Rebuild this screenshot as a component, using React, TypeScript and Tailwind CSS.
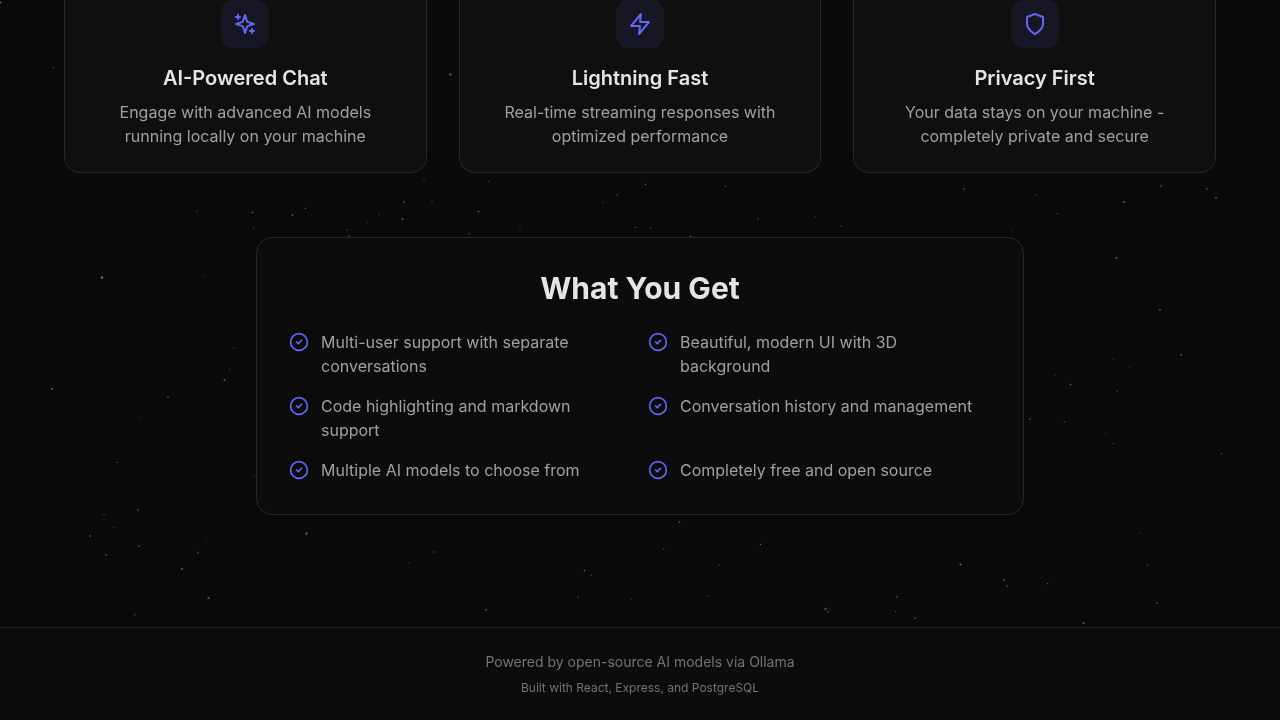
import type { ReactNode } from "react";

const INDIGO = "#6366f1";
const VIOLET = "#a855f7";
const TEAL = "#2bb3a0";
const CYAN = "#2aa5b8";

// Each star: x, y, colour, opacity, radius
type Star = [number, number, string, number, number];

const stars: Star[] = [
  [0.5, 2.5, INDIGO, 0.8, 1], [96.5, 6.5, INDIGO, 0.25, 1], [53.5, 67.5, TEAL, 0.45, 0.8], [450.5, 74.5, CYAN, 0.8, 1.1],
  [424, 180, INDIGO, 0.4, 0.8], [432, 201, TEAL, 0.4, 0.8], [404, 202, INDIGO, 0.6, 0.9], [197, 211, CYAN, 0.45, 0.8],
  [252.5, 212.5, INDIGO, 0.9, 0.8], [305.5, 208.5, TEAL, 0.6, 0.8], [292.5, 215, VIOLET, 0.65, 0.9], [379, 214.5, VIOLET, 0.4, 0.8],
  [402.5, 219, VIOLET, 0.7, 1], [367, 222.5, CYAN, 0.4, 0.8], [253.5, 228.5, INDIGO, 0.5, 0.7], [347, 230, VIOLET, 0.4, 0.8],
  [349, 236, CYAN, 0.5, 0.9], [489, 181.5, INDIGO, 0.5, 0.8], [645.5, 184.5, TEAL, 0.8, 0.7], [725.5, 186.5, INDIGO, 0.8, 0.7],
  [617, 195, VIOLET, 0.4, 0.9], [603, 202.5, INDIGO, 0.5, 0.7], [478.5, 211.5, TEAL, 0.8, 0.8], [758, 219, TEAL, 0.5, 0.8],
  [815, 217, TEAL, 0.45, 0.8], [841, 226, INDIGO, 0.3, 0.9], [635.5, 227.5, INDIGO, 0.7, 0.8], [650.5, 228, INDIGO, 0.6, 0.7],
  [520, 229, VIOLET, 0.4, 0.8], [469, 234, CYAN, 0.6, 0.8], [690.5, 236.5, VIOLET, 0.8, 0.8],
  [964, 189, INDIGO, 0.55, 1], [1036.5, 195, TEAL, 0.5, 0.8], [1057.5, 213.5, TEAL, 0.65, 0.7], [1124, 202, TEAL, 0.65, 1],
  [1161, 186, VIOLET, 0.55, 0.9], [1207, 189, VIOLET, 0.45, 1], [1216, 198, VIOLET, 0.6, 1], [1012, 232, INDIGO, 0.4, 0.8],
  [1116.5, 258, "#7c4df5", 0.8, 1.1], [1160, 310, CYAN, 0.65, 0.9], [1181, 355, CYAN, 0.65, 0.9], [1113.5, 359, INDIGO, 0.5, 0.8],
  [1129.5, 367, INDIGO, 0.35, 0.8], [1055, 375, INDIGO, 0.4, 0.8], [1070.5, 384.5, INDIGO, 0.9, 0.8], [1117, 391, INDIGO, 0.45, 0.9],
  [1030, 419, VIOLET, 0.5, 1], [1064.5, 422, CYAN, 0.45, 0.8], [1106, 433.5, TEAL, 0.4, 0.8], [1113.5, 443.5, INDIGO, 0.7, 0.7],
  [1221.5, 453.5, INDIGO, 0.7, 0.7], [1140, 533, INDIGO, 0.35, 0.8], [1147.5, 565, TEAL, 0.6, 0.8], [1004, 580, VIOLET, 0.6, 1],
  [1007, 586, INDIGO, 0.5, 1], [1047.5, 583.5, INDIGO, 0.7, 0.7], [1157, 603, INDIGO, 0.5, 1], [1083.5, 623, INDIGO, 0.8, 0.9],
  [102, 277.5, CYAN, 0.85, 1.2], [205, 276, INDIGO, 0.3, 0.8], [234, 348, TEAL, 0.4, 0.8], [230, 369.5, CYAN, 0.45, 0.8],
  [224.5, 380, CYAN, 0.7, 0.9], [52, 389, CYAN, 0.75, 1], [168, 397, VIOLET, 0.6, 0.9], [141, 418, INDIGO, 0.35, 0.8],
  [117, 462.5, INDIGO, 0.6, 0.8], [254.5, 476, INDIGO, 0.4, 0.8], [138, 510, INDIGO, 0.5, 1], [104, 514.5, CYAN, 0.5, 0.8],
  [114, 527.5, INDIGO, 0.5, 0.7], [90, 536, TEAL, 0.55, 0.9], [139, 546, VIOLET, 0.55, 1], [206, 539, INDIGO, 0.3, 0.8],
  [198, 552.5, INDIGO, 0.6, 0.9], [106, 555, INDIGO, 0.6, 1], [182, 569, CYAN, 0.7, 1], [208.5, 598, VIOLET, 0.75, 1.1],
  [134.5, 615, VIOLET, 0.4, 0.9], [306.5, 533.5, CYAN, 0.9, 1.1], [434, 552, TEAL, 0.55, 0.8], [409, 563, INDIGO, 0.35, 0.8],
  [584.5, 570.5, CYAN, 0.9, 0.7], [591, 575, INDIGO, 0.3, 1], [578, 597, TEAL, 0.5, 0.8], [631, 599, INDIGO, 0.45, 0.8],
  [486, 610, TEAL, 0.6, 1], [679.5, 522, TEAL, 0.6, 0.9], [663.5, 549, INDIGO, 0.6, 0.8], [760.5, 544.5, VIOLET, 0.75, 0.7],
  [719, 565, TEAL, 0.3, 1], [708, 596, TEAL, 0.25, 1], [960.5, 564.5, CYAN, 0.85, 1], [897, 597, CYAN, 0.5, 0.9],
  [825.5, 609, TEAL, 0.7, 1], [828, 612, INDIGO, 0.5, 0.9], [830, 608.5, INDIGO, 0.25, 0.9], [895.5, 611.5, INDIGO, 0.65, 0.7],
  [915, 618, CYAN, 0.5, 1], [267, 507, TEAL, 0.5, 0.9], [646, 510, INDIGO, 0.5, 0.8], [781, 511, INDIGO, 0.25, 0.8],
  [369, 239, INDIGO, 0.45, 0.8], [889, 254, TEAL, 0.3, 0.8], [951, 241, TEAL, 0.3, 0.8], [994, 249, INDIGO, 0.35, 0.8],
  [702.5, 492, INDIGO, 0.25, 0.8], [278, 628.5, INDIGO, 0.35, 0.8], [258, 644, INDIGO, 0.2, 0.8], [32, 719, TEAL, 0.4, 0.8],
  [227, 164, TEAL, 0.35, 0.9], [311, 161, INDIGO, 0.25, 0.8], [515, 164, INDIGO, 0.3, 0.8], [866, 51, TEAL, 0.3, 0.8],
];

function Starfield() {
  return (
    <svg aria-hidden="true" className="pointer-events-none fixed inset-0 h-full w-full">
      {stars.map(([x, y, color, opacity, radius], i) => (
        <circle key={i} cx={x} cy={y} r={radius} fill={color} opacity={opacity} />
      ))}
    </svg>
  );
}

function Icon({ className, children }: { className: string; children: ReactNode }) {
  return (
    <svg
      aria-hidden="true"
      viewBox="0 0 24 24"
      fill="none"
      stroke="currentColor"
      strokeWidth="2"
      strokeLinecap="round"
      strokeLinejoin="round"
      className={className}
    >
      {children}
    </svg>
  );
}

const features = [
  {
    title: "AI-Powered Chat",
    text: "Engage with advanced AI models running locally on your machine",
    icon: (
      <>
        <path d="m12 3-1.912 5.813a2 2 0 0 1-1.275 1.275L3 12l5.813 1.912a2 2 0 0 1 1.275 1.275L12 21l1.912-5.813a2 2 0 0 1 1.275-1.275L21 12l-5.813-1.912a2 2 0 0 1-1.275-1.275L12 3Z" />
        <path d="M5 3v4M19 17v4M3 5h4M17 19h4" />
      </>
    ),
  },
  {
    title: "Lightning Fast",
    text: "Real-time streaming responses with optimized performance",
    icon: <polygon points="13 2 3 14 12 14 11 22 21 10 12 10 13 2" />,
  },
  {
    title: "Privacy First",
    text: "Your data stays on your machine - completely private and secure",
    icon: <path d="M12 22s8-4 8-10V5l-8-3-8 3v7c0 6 8 10 8 10" />,
  },
];

const benefits = [
  "Multi-user support with separate conversations",
  "Beautiful, modern UI with 3D background",
  "Code highlighting and markdown support",
  "Conversation history and management",
  "Multiple AI models to choose from",
  "Completely free and open source",
];

export default function App() {
  return (
    <div className="flex min-h-screen flex-col bg-[#0a0a0a] font-['Inter',sans-serif] text-[#e5e5e5] antialiased">
      <Starfield />
      <main className="relative flex-1 px-16 pb-28">
        <section className="grid grid-cols-3 gap-8">
          {features.map((feature) => (
            <article
              key={feature.title}
              className="flex flex-col items-center rounded-b-2xl border border-t-0 border-[#262626] bg-[#0f0f0f]/90 px-8 pb-6 text-center"
            >
              <div className="mb-4 flex size-12 items-center justify-center rounded-xl bg-[#171624] text-[#6366f1]">
                <Icon className="size-6">{feature.icon}</Icon>
              </div>
              <h3 className="mb-2 text-xl font-semibold">{feature.title}</h3>
              <p className="text-base text-[#a0a0a0]">{feature.text}</p>
            </article>
          ))}
        </section>

        <section className="mx-auto mt-16 max-w-3xl rounded-2xl border border-[#262626] bg-[#0c0c0c]/80 p-8">
          <h2 className="mb-6 text-center text-3xl font-bold">What You Get</h2>
          <ul className="grid grid-cols-2 gap-4">
            {benefits.map((benefit) => (
              <li key={benefit} className="flex items-start gap-3">
                <Icon className="mt-0.5 size-5 shrink-0 text-[#6366f1]">
                  <circle cx="12" cy="12" r="10" />
                  <path d="m9 12 2 2 4-4" />
                </Icon>
                <span className="text-base text-[#a0a0a0]">{benefit}</span>
              </li>
            ))}
          </ul>
        </section>
      </main>

      <footer className="relative border-t border-[#262626] bg-[#0c0c0c]/90 px-4 py-6 text-center text-[#737373]">
        <p className="text-sm">Powered by open-source AI models via Ollama</p>
        <p className="mt-2 text-xs">Built with React, Express, and PostgreSQL</p>
      </footer>
    </div>
  );
}
